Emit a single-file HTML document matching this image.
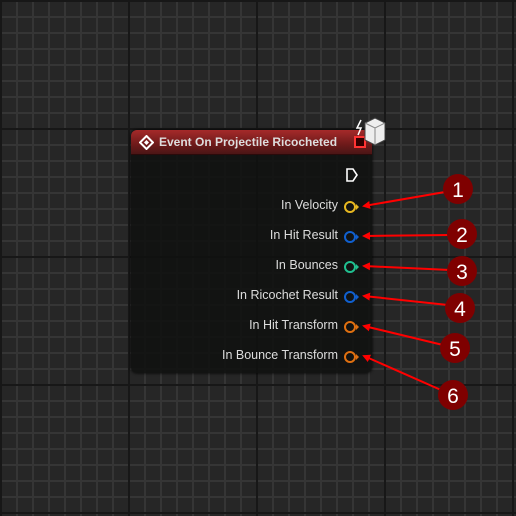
<!DOCTYPE html>
<html><head><style>
html,body{margin:0;padding:0}
body{width:516px;height:516px;overflow:hidden;position:relative;background:#262626;
background-image:
linear-gradient(to right,#171717 0,#171717 2px,transparent 2px),
linear-gradient(to bottom,#171717 0,#171717 2px,transparent 2px),
linear-gradient(to right,#353535 0,#353535 2px,transparent 2px),
linear-gradient(to bottom,#353535 0,#353535 2px,transparent 2px);
background-size:128px 128px,128px 128px,16px 16px,16px 16px;
font-family:"Liberation Sans",sans-serif}
.node{position:absolute;left:131px;top:130px;width:241px;height:243px;border-radius:6px;background:rgba(16,17,16,0.88);box-shadow:0 0 3px #000;overflow:hidden}
.hdr{height:24px;background:linear-gradient(to bottom,#a52a2a,#6e1a1a 60%,#4a1616);border-bottom:1px solid #2a0a0a;color:#ddd;font-weight:bold;font-size:12px;line-height:25px;padding-left:28px;position:relative}
.lbl{position:absolute;right:34px;color:#ddd;font-size:12.5px}
.pin{position:absolute;width:8px;height:8px;border-radius:50%;border:2px solid}
.pin::after{content:"";position:absolute;left:10px;top:1px;border-left:3px solid;border-left-color:inherit;border-top:3px solid transparent;border-bottom:3px solid transparent}
</style></head><body>
<div class="node">
 <div class="hdr">Event On Projectile Ricocheted
  <svg style="position:absolute;left:8px;top:5px" width="15" height="15"><path d="M7.5 1 L14 7.5 L7.5 14 L1 7.5Z" fill="none" stroke="#fff" stroke-width="2"/><path d="M7.5 5 L10 7.5 L7.5 10 L5 7.5Z" fill="#fff"/></svg>
  <div style="position:absolute;left:223px;top:6px;width:8px;height:8px;background:#300;border:2px solid #f33"></div>
 </div>
 <svg style="position:absolute;left:214px;top:37px" width="14" height="16"><path d="M2 2 H8 L12 8 L8 14 H2Z" fill="none" stroke="#fff" stroke-width="1.6"/></svg>
 <div class="lbl" style="top:68px">In Velocity</div>
 <div class="lbl" style="top:98px">In Hit Result</div>
 <div class="lbl" style="top:128px">In Bounces</div>
 <div class="lbl" style="top:158px">In Ricochet Result</div>
 <div class="lbl" style="top:188px">In Hit Transform</div>
 <div class="lbl" style="top:218px">In Bounce Transform</div>
 <div class="pin" style="left:213px;top:71px;border-color:#e8b820"></div>
 <div class="pin" style="left:213px;top:101px;border-color:#1060d0"></div>
 <div class="pin" style="left:213px;top:131px;border-color:#20c090"></div>
 <div class="pin" style="left:213px;top:161px;border-color:#1060d0"></div>
 <div class="pin" style="left:213px;top:191px;border-color:#e07010"></div>
 <div class="pin" style="left:213px;top:221px;border-color:#e07010"></div>
</div>
<svg style="position:absolute;left:355px;top:115px" width="35" height="35">
 <path d="M6 5 L2 13 L6 13 L3 20" fill="none" stroke="#fff" stroke-width="1.5"/>
 <path d="M10 8 L20 3 L30 8 L30 25 L20 30 L10 25Z" fill="#eee" stroke="#444" stroke-width="1"/>
 <path d="M10 8 L20 13 L30 8 M20 13 V30" stroke="#888" fill="none"/>
</svg>
<svg style="position:absolute;left:0;top:0" width="516" height="516">
 <defs><marker id="a" markerWidth="8" markerHeight="8" refX="6" refY="4" orient="auto" markerUnits="userSpaceOnUse"><path d="M0 0 L8 4 L0 8Z" fill="#f00"/></marker></defs>
 <g stroke="#f00" stroke-width="2" marker-end="url(#a)">
  <line x1="445" y1="192" x2="364" y2="206"/>
  <line x1="450" y1="235" x2="364" y2="236"/>
  <line x1="450" y1="270" x2="364" y2="266"/>
  <line x1="448" y1="305" x2="364" y2="296"/>
  <line x1="443" y1="345" x2="364" y2="326"/>
  <line x1="441" y1="390" x2="364" y2="356"/>
 </g>
 <g fill="#7f0000">
  <circle cx="458" cy="189" r="15"/><circle cx="462" cy="234" r="15"/><circle cx="462" cy="271" r="15"/>
  <circle cx="460" cy="308" r="15"/><circle cx="455" cy="348" r="15"/><circle cx="453" cy="395" r="15"/>
 </g>
 <g fill="#fff" font-family="Liberation Sans" font-size="21" text-anchor="middle">
  <text x="458" y="197">1</text><text x="462" y="242">2</text><text x="462" y="279">3</text>
  <text x="460" y="316">4</text><text x="455" y="356">5</text><text x="453" y="403">6</text>
 </g>
</svg>
</body></html>
